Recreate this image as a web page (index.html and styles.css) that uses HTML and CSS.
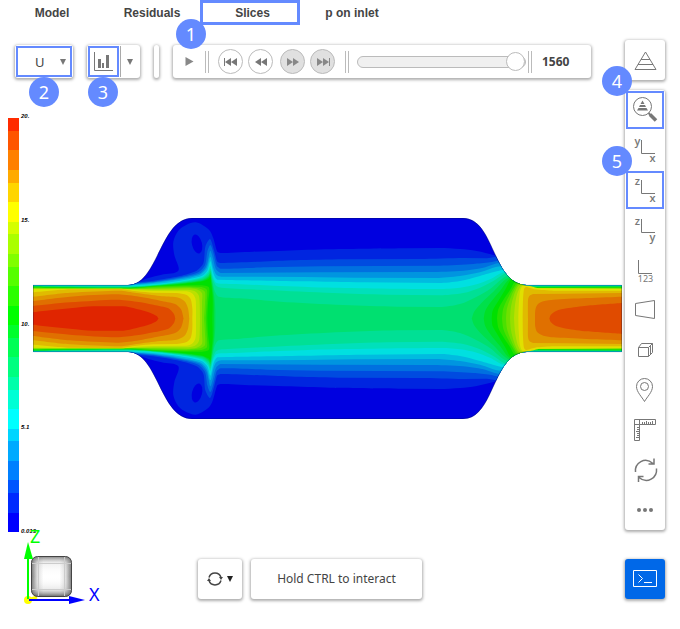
FILE: index.html
```html
<!DOCTYPE html>
<html lang="en">
<head>
<meta charset="utf-8">
<meta name="viewport" content="width=device-width, initial-scale=1">
<title>Slices</title>
<link rel="stylesheet" href="styles.css">
</head>
<body>
<div class="app">
  <main class="stage">
    <nav class="tabs">
      <button class="tab" type="button">Model</button>
      <button class="tab" type="button">Residuals</button>
      <button class="tab marked" type="button">Slices</button>
      <button class="tab" type="button">p on inlet</button>
    </nav>

    <div class="toolbar">
      <div class="card field">
        <label class="marked field-label">
          <select class="field-select" aria-label="Field"><option>U</option></select>
          <svg class="caret" viewBox="0 0 6 6"><path d="M0 0H6L3 6Z"/></svg>
        </label>
        <span class="badge below">2</span>
      </div>
      <div class="card chart">
        <button class="marked chart-button" type="button" aria-label="Chart">
          <svg class="chart-icon" viewBox="0 0 20 20"><path class="line" d="M.500 0V18.500H19"/><path class="solid" d="M4 7h3v9H4zM8 11h2v5H8zM12 3h3v13h-3z"/></svg>
        </button>
        <button class="chart-more" type="button" aria-label="Chart options"><svg class="caret" viewBox="0 0 6 6"><path d="M0 0H6L3 6Z"/></svg></button>
        <span class="badge below chart-badge">3</span>
      </div>
      <div class="card sliver"></div>
      <div class="card player">
        <button class="play" type="button" aria-label="Play"><svg class="play-icon" viewBox="0 0 8 9"><path d="M0 0L8 4.500L0 9Z"/></svg></button>
        <span class="divider"></span>
        <div class="steps">
          <button class="step" type="button" aria-label="First"><svg viewBox="0 0 14 8"><path d="M0 0h1v8H0zM7 0v8L1 4zM13 0v8L7 4z"/></svg></button>
          <button class="step" type="button" aria-label="Previous"><svg viewBox="0 0 14 8"><path d="M7 0v8L1 4zM13 0v8L7 4z"/></svg></button>
        </div>
        <div class="steps">
          <button class="step off" type="button" aria-label="Next"><svg viewBox="0 0 14 8"><path d="M1 0v8L7 4zM7 0v8L13 4z"/></svg></button>
          <button class="step off" type="button" aria-label="Last"><svg viewBox="0 0 14 8"><path d="M1 0v8L7 4zM7 0v8L13 4zM13 0h1v8h-1z"/></svg></button>
        </div>
        <span class="divider"></span>
        <input class="time" type="range" min="0" max="1560" value="1560" aria-label="Time step">
        <span class="divider"></span>
        <output class="time-value">1560</output>
        <span class="badge first">1</span>
      </div>
    </div>

    <div class="scene">
      <div class="legend">
        <svg class="scale" id="scale" viewBox="0 0 11 414" preserveAspectRatio="none" shape-rendering="crispEdges"></svg>
        <div class="ticks"><span>20.</span><span>15.</span><span>10.</span><span>5.1</span><span>0.013</span></div>
      </div>
      <svg class="duct" viewBox="39 54 1767 603">
        <defs>
          <clipPath id="shape"><path d="M39 255H324C414 255 420 54 516 54H1329C1425 54 1416 255 1521 255H1806V456H1521C1416 456 1425 657 1329 657H516C420 657 414 456 324 456H39Z"/></clipPath>
        </defs>
        <g clip-path="url(#shape)">
          <rect x="39" y="54" width="1767" height="603" fill="#0000e0"/>
          <g id="half"></g>
          <use href="#half" transform="matrix(1 0 0 -1 0 711)"/>
        </g>
        <path class="wall" d="M39 256H324C414 255 420 55 516 55H1329C1425 55 1416 255 1521 256H1805V455H1521C1416 456 1425 656 1329 656H516C420 656 414 456 324 455H40V256"/>
      </svg>
    </div>

    <div class="footer">
      <svg class="gizmo" viewBox="8 532 100 73">
        <defs>
          <linearGradient id="gx"><stop offset="0" stop-color="#777"/><stop offset=".14" stop-color="#ddd"/><stop offset=".3" stop-color="#fff"/><stop offset=".7" stop-color="#fff"/><stop offset=".86" stop-color="#ddd"/><stop offset="1" stop-color="#777"/></linearGradient>
          <linearGradient id="gy" x2="0" y2="1"><stop offset="0" stop-color="#555" stop-opacity=".7"/><stop offset=".16" stop-color="#999" stop-opacity=".15"/><stop offset=".5" stop-color="#fff" stop-opacity="0"/><stop offset=".82" stop-color="#999" stop-opacity=".2"/><stop offset="1" stop-color="#444" stop-opacity=".8"/></linearGradient>
        </defs>
        <circle cx="28" cy="600" r="4" fill="#ff0"/>
        <path d="M28 600L37 597" stroke="#ff0" stroke-width="3"/>
        <rect x="31.500" y="556.500" width="40" height="40" rx="6" fill="url(#gx)"/>
        <rect x="31.500" y="556.500" width="40" height="40" rx="6" fill="url(#gy)" stroke="#444"/>
        <path d="M38.500 557V596M64.500 557V596M32 563.500H71M32 589.500H71" stroke="#ccc" fill="none"/>
        <path d="M28 599V557" stroke="#0f0" stroke-width="2"/><path d="M28 542L33 559H24Z" fill="#0f0"/>
        <path d="M29 600H70" stroke="#00f" stroke-width="2"/><path d="M85 600L69 596V604Z" fill="#00f"/>
        <text x="30" y="543" class="axis" fill="#0f0">Z</text>
        <text x="89" y="601" class="axis" fill="#00f">X</text>
      </svg>
      <button class="card reset" type="button" aria-label="Reset view">
        <svg class="reset-icon" viewBox="0 0 16 16"><path d="M2 6.500A6.300 6.300 0 0 1 14 6.500M14 9.500A6.300 6.300 0 0 1 2 9.500"/><path class="tip" d="M12 6h4l-2 3zM0 10h4l-2-3z"/></svg>
        <svg class="caret dark" viewBox="0 0 6 6"><path d="M0 0H6L3 6Z"/></svg>
      </button>
      <button class="card hold" type="button">Hold CTRL to interact</button>
    </div>
  </main>

  <aside class="rail">
    <div class="card">
      <button class="tool" type="button" aria-label="Mesh"><svg viewBox="0 0 40 40"><path d="M20.500 12L31 29.500H10ZM16 19.500H25M13 24.500H28"/></svg></button>
    </div>
    <div class="card tools">
      <button class="tool" type="button" aria-label="Zoom to fit"><svg viewBox="0 0 40 40"><circle cx="17.500" cy="16.500" r="9"/><path class="fill" d="M17.500 10.500L19.500 14H15.500ZM15 15H20L21 17H14ZM13.500 18H21.500L23 20.500H12Z"/><path d="M23.500 23L26 25.500" stroke-width="2"/><path d="M25 24.500L31 30.500" stroke-width="3.500"/></svg><span class="badge side">4</span></button>
      <button class="tool" type="button" aria-label="View y x"><svg viewBox="0 0 40 40"><path d="M16.500 10V23.500H30"/><text x="12.500" y="15">y</text><text x="27.500" y="32">x</text></svg></button>
      <button class="tool" type="button" aria-label="View z x"><svg viewBox="0 0 40 40"><path d="M16.500 10V23.500H30"/><text x="12.500" y="15">z</text><text x="27.500" y="32">x</text></svg><span class="badge side">5</span></button>
      <button class="tool" type="button" aria-label="View z y"><svg viewBox="0 0 40 40"><path d="M16.500 9V22.500H30"/><text x="12.500" y="15">z</text><text x="27.500" y="31">y</text></svg></button>
      <button class="tool" type="button" aria-label="View coordinates"><svg viewBox="0 0 40 40"><path d="M13.500 10V23.500H27"/><text class="digits" x="20.500" y="32">123</text></svg></button>
      <button class="tool" type="button" aria-label="Perspective"><svg viewBox="0 0 40 40"><path d="M10.500 13.500L29.500 10.500V28.500L10.500 25.500Z"/></svg></button>
      <button class="tool" type="button" aria-label="Box"><svg viewBox="0 0 40 40"><path d="M13.500 17.500H23.500V26.500H13.500ZM13.500 17.500L16.500 13.500H27.500V22.500L23.500 26.500M23.500 17.500L27.500 13.500M25.500 16V24"/></svg></button>
      <button class="tool" type="button" aria-label="Probe"><svg viewBox="0 0 40 40"><path stroke-width="1" d="M19.500 31.500C17 27 11.500 22 11.500 16.500A8 8 0 0 1 27.500 16.500C27.500 22 22 27 19.500 31.500Z"/><circle stroke-width="1" cx="19.500" cy="16.500" r="4"/></svg></button>
      <button class="tool" type="button" aria-label="Measure"><svg viewBox="0 0 40 40"><path stroke-width="1" d="M9.500 9.500H30.500V14.500H14.500V30.500H9.500ZM9.500 14.500H14.500V9.500M17.500 14V12M19.500 14V12M21.500 14V11M23.500 14V12M25.500 14V12M27.500 14V11M14 17.500H12M14 19.500H12M14 21.500H11M14 23.500H12M14 25.500H12M14 27.500H11"/></svg></button>
      <button class="tool" type="button" aria-label="Rotate"><svg viewBox="0 0 40 40"><path stroke-width="1.500" d="M10.500 22C9.500 13 20 6 28 13.500M31.500 18.500C32.500 28 22 34.500 14 27.500M23.500 14H29V8.500M18.500 26.500H13.500V32"/></svg></button>
      <button class="tool" type="button" aria-label="More"><svg viewBox="0 0 40 40"><g class="fill"><circle cx="14" cy="20" r="2"/><circle cx="20" cy="20" r="2"/><circle cx="26" cy="20" r="2"/></g></svg></button>
    </div>
    <button class="card terminal" type="button" aria-label="Console"><svg viewBox="0 0 40 40"><path d="M8.500 11.500H31.500V27.500H8.500ZM13.500 15.500L17.500 19.500L13.500 23.500M19 23.500H27"/></svg></button>
  </aside>
</div>
<script src="contours.js"></script>
</body>
</html>
```
FILE: styles.css
```css
* { box-sizing: border-box; }

body {
  margin: 0;
  background: #fff;
  color: #444;
  font: 12px/16px "Noto Sans", "Open Sans", sans-serif;
}

button, select {
  margin: 0;
  padding: 0;
  border: 0;
  background: none;
  color: inherit;
  font: inherit;
}

svg { display: block; }

.app {
  display: grid;
  grid-template-columns: minmax(0, 1fr) 40px;
  gap: 3px;
  padding: 0 15px 0 8px;
}

.card {
  position: relative;
  border-radius: 3px;
  background: #fff;
  box-shadow: 0 1px 3px 1px rgba(0, 0, 0, .32);
}

.marked { border: 2px solid #648aff; }

.badge {
  position: absolute;
  z-index: 2;
  width: 30px;
  height: 30px;
  border-radius: 50%;
  background: #648aff;
  color: #fff;
  font: 18px/30px "Noto Sans", sans-serif;
  text-align: center;
}

.badge.below { top: 32px; left: 14px; }
.badge.chart-badge { left: 1px; }
.badge.first { top: -26px; left: 3px; }
.badge.side { top: -24px; left: -23px; }

/* Tabs */
.tabs {
  display: flex;
  height: 25px;
  margin-left: -6px;
}

.tab {
  width: 100px;
  font: bold 12px/16px "Liberation Sans", Arial, sans-serif;
}

.tab.marked {
  margin: 0 2px 0 -2px;
  padding-left: 5px;
  border-width: 3px;
}

/* Toolbar */
.toolbar {
  display: flex;
  gap: 14px;
  margin: 20px 31px 0 7px;
}

.toolbar .card { height: 33px; }

.field { width: 58px; padding: 1px; }

.field-label {
  display: flex;
  align-items: center;
  height: 31px;
  padding-right: 4px;
}

.field-select {
  flex: 1;
  min-width: 0;
  padding-left: 17px;
  appearance: none;
  outline: 0;
  font-size: 13px;
}

.caret {
  width: 6px;
  height: 6px;
  fill: #777;
}

.caret.dark { fill: #222; }

.chart {
  display: flex;
  width: 53px;
  padding: 1px;
}

.chart-button {
  display: grid;
  place-items: center;
  width: 31px;
}

.chart-icon { width: 20px; height: 20px; }
.line { fill: none; stroke: #777; }
.solid { fill: #777; }

.chart-more {
  display: grid;
  flex: 1;
  place-items: center;
  margin-left: 1px;
  border-left: 1px solid #aaa;
}

.sliver { width: 5px; }

.player {
  display: flex;
  flex: 1;
  align-items: center;
}

.play {
  display: grid;
  place-items: center;
  width: 32px;
  height: 33px;
}

.play-icon { width: 9px; height: 9px; fill: #888; }

.divider {
  width: 4px;
  height: 22px;
  border: solid #bbb;
  border-width: 0 1px;
}

.steps {
  display: flex;
  gap: 5px;
  margin-left: 9px;
}

.steps + .steps { margin: 0 10px 0 7px; }

.step {
  display: grid;
  place-items: center;
  width: 25px;
  height: 25px;
  border: 1px solid #bbb;
  border-radius: 50%;
}

.step svg { width: 14px; height: 8px; fill: #777; }
.step.off { background: #e0e0e0; }
.step.off svg { fill: #888; }

.time {
  flex: 1;
  min-width: 0;
  height: 20px;
  margin: 0 2px 0 8px;
  appearance: none;
  background: none;
}

.time::-webkit-slider-runnable-track {
  height: 12px;
  border: 1px solid #bbb;
  border-radius: 6px;
  background: #f0f0f0;
}

.time::-webkit-slider-thumb {
  width: 19px;
  height: 19px;
  margin-top: -5px;
  appearance: none;
  border: 1px solid #bbb;
  border-radius: 50%;
  background: #fff;
}

.time-value {
  width: 59px;
  padding-left: 10px;
  font-weight: bold;
}

/* Scene */
.scene {
  display: flex;
  align-items: flex-start;
  margin-top: 40px;
}

.legend {
  display: flex;
  gap: 2px;
  width: 25px;
}

.scale { flex: none; width: 11px; height: 414px; }

.ticks {
  display: flex;
  flex-direction: column;
  justify-content: space-between;
  margin: -5px 0 -2px;
  color: #000;
  font: italic bold 6px/6px "Liberation Sans", Arial, sans-serif;
}

.duct {
  flex: 1;
  min-width: 0;
  margin-top: 100px;
}

.wall {
  fill: none;
  stroke: #001040;
  stroke-opacity: .5;
  stroke-width: 2px;
}

/* Footer */
.footer {
  display: flex;
  align-items: flex-start;
}

.gizmo {
  width: 100px;
  height: 73px;
  margin-right: 90px;
  overflow: visible;
}

.axis { font: 18px "Noto Sans", sans-serif; }

.footer .card { height: 40px; margin-top: 27px; }

.reset {
  display: flex;
  align-items: center;
  justify-content: center;
  gap: 4px;
  width: 44px;
  margin-right: 9px;
}

.reset-icon {
  width: 16px;
  height: 16px;
  fill: none;
  stroke: #444;
  stroke-width: 1.5px;
}

.tip { fill: #444; stroke: none; }

.hold { width: 171px; }

/* Right rail */
.rail { padding-top: 40px; }

.tools { margin-top: 10px; }

.tool {
  display: block;
  position: relative;
  width: 40px;
  height: 40px;
}

.tool svg, .terminal svg {
  width: 40px;
  height: 40px;
  fill: none;
  stroke: #777;
}

.tool:has(.badge)::after {
  position: absolute;
  inset: 1px;
  border: 2px solid #648aff;
  content: "";
}

.tool .fill { fill: #777; stroke: none; }

.tool text {
  fill: #777;
  stroke: none;
  font: 600 11px "Open Sans", sans-serif;
  text-anchor: middle;
}

.tool .digits { font: 9px "Noto Sans", sans-serif; }

.terminal {
  display: block;
  height: 40px;
  margin-top: 29px;
  background: #0068e8;
}

.terminal svg { stroke: #fff; }
```
FILE: contours.js
```js
const NS = "http://www.w3.org/2000/svg";

function add(parent, name, attrs) {
  const el = document.createElementNS(NS, name);
  for (const key in attrs) el.setAttribute(key, attrs[key]);
  parent.appendChild(el);
}

// Rainbow steps from slow (blue) to fast (red), for a given full intensity.
function rainbow(level, full) {
  const s = v => Math.round(full * Math.max(0, Math.min(6, v)) / 6);
  const r = s(level - 12), b = s(12 - level);
  const g = level <= 12 ? s(level) : s(24 - level);
  return `rgb(${r},${g},${b})`;
}

// Colour scale, fastest at the top.
const edges = [0, 13, 32, 52, 65, 84, 104, 116, 136, 149, 168, 188, 207, 220, 239, 259, 272, 291, 311, 323, 343, 362, 375, 395, 414];
const scale = document.getElementById("scale");
for (let i = 0; i < 24; i++) {
  add(scale, "rect", { x: 0, y: edges[i], width: 11, height: edges[i + 1] - edges[i], fill: rainbow(23 - i, 255) });
}

// Smooth curve through the points (Catmull-Rom), closed along the duct axis.
// Nearly level stretches stay straight so that they follow the wall.
function region(points) {
  let d = `M${points[0][0]} 357L${points[0]}`;
  for (let i = 0; i < points.length - 1; i++) {
    const p0 = points[i - 1] || points[i], p1 = points[i], p2 = points[i + 1], p3 = points[i + 2] || p2;
    if (Math.abs(p2[1] - p1[1]) < 3) {
      d += `L${p2}`;
      continue;
    }
    const h = k => Math.min(1, Math.hypot(p2[0] - p1[0], p2[1] - p1[1]) / (k || 1));
    const a = h(Math.hypot(p1[0] - p0[0], p1[1] - p0[1])), b = h(Math.hypot(p3[0] - p2[0], p3[1] - p2[1]));
    d += `C${p1[0] + (p2[0] - p0[0]) * a / 6} ${p1[1] + (p2[1] - p0[1]) * a / 6} ${p2[0] - (p3[0] - p1[0]) * b / 6} ${p2[1] - (p3[1] - p1[1]) * b / 6} ${p2}`;
  }
  return d + `L${points[points.length - 1][0]} 357Z`;
}

// Iso-speed lines of the upper half: [level, points].
const contours = [
  [1, [[39,254],[324,254],[355,245],[385,234],[425,224],[475,212],[463,165],[460,125],[475,92],[500,74],[527,67],[552,78],[570,93],[580,115],[592,155],[605,159],[700,155],[795,152],[930,148],[1160,145],[1260,144],[1320,147],[1370,153],[1420,165],[1450,175],[1521,254],[1806,254]]],
  [0, [[514,130]]],
  [2, [[39,254],[324,254],[355,247],[400,242],[480,228],[530,212],[550,190],[556,140],[570,117],[582,150],[592,185],[604,189],[720,185],[825,181],[970,178],[1200,177],[1330,174],[1400,175],[1440,172],[1521,254],[1806,254]]],
  [3, [[39,254],[324,254],[355,249],[400,245],[480,232],[535,217],[555,195],[562,155],[571,135],[580,158],[590,197],[602,206],[740,202],[900,199],[1080,198],[1260,197],[1360,192],[1410,187],[1440,183],[1521,254],[1806,254]]],
  [4, [[39,254],[324,254],[355,251],[400,247],[480,235],[540,220],[558,200],[566,170],[571,152],[578,172],[588,208],[602,219],[900,217],[1230,216],[1330,212],[1390,203],[1445,190],[1521,254],[1806,254]]],
  [5, [[39,255],[324,255],[355,253],[400,249],[480,238],[540,224],[560,205],[571,170],[580,205],[589,224],[604,230],[850,231],[1000,233],[1250,234],[1320,228],[1380,217],[1450,200],[1521,255],[1806,255]]],
  [6, [[39,256],[330,256],[400,252],[480,242],[545,228],[562,212],[571,184],[581,222],[592,239],[620,240],[850,244],[1030,247],[1260,249],[1320,243],[1380,228],[1430,214],[1458,209],[1521,256],[1806,256]]],
  [7, [[39,257],[330,258],[400,254],[480,245],[545,232],[564,215],[571,198],[579,230],[590,249],[650,252],[760,257],[940,263],[1260,267],[1320,263],[1370,253],[1410,238],[1455,217],[1521,257],[1806,257]]],
  [8, [[39,258],[330,260],[400,256],[480,247],[545,235],[565,220],[571,206],[578,235],[588,257],[605,263],[740,270],[940,279],[1100,284],[1260,286],[1330,279],[1380,263],[1420,243],[1463,219],[1521,258],[1806,258]]],
  [9, [[39,259],[330,261],[400,257],[480,249],[545,238],[566,225],[571,213],[577,242],[585,275],[596,290],[660,295],[780,305],[970,315],[1130,320],[1260,321],[1320,312],[1370,290],[1410,267],[1466,227],[1521,259],[1806,258]]],
  [10, [[39,259],[330,262],[480,250],[548,240],[566,229],[571,219],[576,245],[583,290],[586,330],[586,357]]],
  [11, [[39,260],[330,263],[480,251],[548,242],[566,232],[571,224],[575,250],[581,300],[582,357]]],
  [12, [[39,260],[330,264],[480,253],[548,244],[566,236],[571,230],[574,255],[578,300],[577,357]]],
  [13, [[39,262],[330,265],[400,259],[500,256],[545,256],[566,261],[568,275],[564,310],[562,357]]],
  [14, [[39,263],[330,266],[400,261],[500,259],[545,261],[561,270],[560,310],[557,357]]],
  [15, [[39,264],[330,267],[400,264],[500,262],[540,266],[555,276],[555,310],[552,357]]],
  [16, [[39,265],[300,266],[400,267],[500,265],[530,268],[546,280],[546,310],[546,357]]],
  [17, [[39,267],[300,266],[350,268],[400,269],[500,269],[523,273],[536,286],[539,310],[540,357]]],
  [18, [[39,268],[300,266],[350,271],[400,273],[500,274],[516,280],[526,295],[528,320],[528,357]]],
  [19, [[39,277],[150,268],[300,267],[350,274],[400,278],[470,279],[500,285],[512,297],[517,325],[517,357]]],
  [20, [[39,290],[150,278],[300,272],[350,279],[420,288],[470,292],[493,303],[504,325],[508,357]]],
  [21, [[39,303],[150,290],[290,283],[350,289],[420,302],[465,312],[483,328],[491,357]]],
  [22, [[39,318],[150,307],[290,299],[350,305],[400,314],[445,325],[462,342],[466,357]]],
  [23, [[39,337],[90,331],[150,325],[220,319],[310,319],[350,327],[390,338],[410,348],[416,357]]],
  [10, [[1355,357],[1362,336],[1385,308],[1420,275],[1470,232],[1521,260],[1806,259]]],
  [11, [[1391,357],[1396,332],[1412,307],[1440,273],[1474,235],[1521,261],[1806,260]]],
  [12, [[1415,357],[1418,332],[1435,303],[1455,270],[1476,238],[1521,262],[1806,261]]],
  [13, [[1431,357],[1435,328],[1450,300],[1470,270],[1487,245],[1521,263],[1806,262]]],
  [14, [[1446,357],[1450,325],[1464,293],[1480,265],[1493,248],[1521,264],[1806,263]]],
  [15, [[1458,357],[1461,325],[1473,290],[1485,265],[1498,250],[1521,265],[1806,264]]],
  [16, [[1470,357],[1473,320],[1482,285],[1492,262],[1503,252],[1530,265],[1806,265]]],
  [17, [[1482,357],[1485,315],[1492,280],[1501,260],[1508,254],[1540,265],[1806,267]]],
  [18, [[1495,357],[1496,320],[1500,275],[1508,257],[1525,257],[1560,265],[1806,267]]],
  [19, [[1508,357],[1509,300],[1512,267],[1518,261],[1545,268],[1600,272],[1806,272]]],
  [20, [[1524,357],[1524,300],[1528,288],[1540,282],[1640,281],[1806,279]]],
  [21, [[1545,357],[1546,330],[1552,314],[1570,304],[1600,299],[1700,294],[1806,290]]],
  [22, [[1588,357],[1592,345],[1608,333],[1640,325],[1700,317],[1806,309]]]
];

const half = document.getElementById("half");
for (const [level, points] of contours) {
  if (points.length > 1) add(half, "path", { d: region(points), fill: rainbow(level, 224) });
  // Still core of the recirculation vortex.
  else add(half, "ellipse", { cx: 531, cy: 132, rx: 15, ry: 29, transform: "rotate(-14 531 132)", fill: rainbow(0, 224) });
}
```
